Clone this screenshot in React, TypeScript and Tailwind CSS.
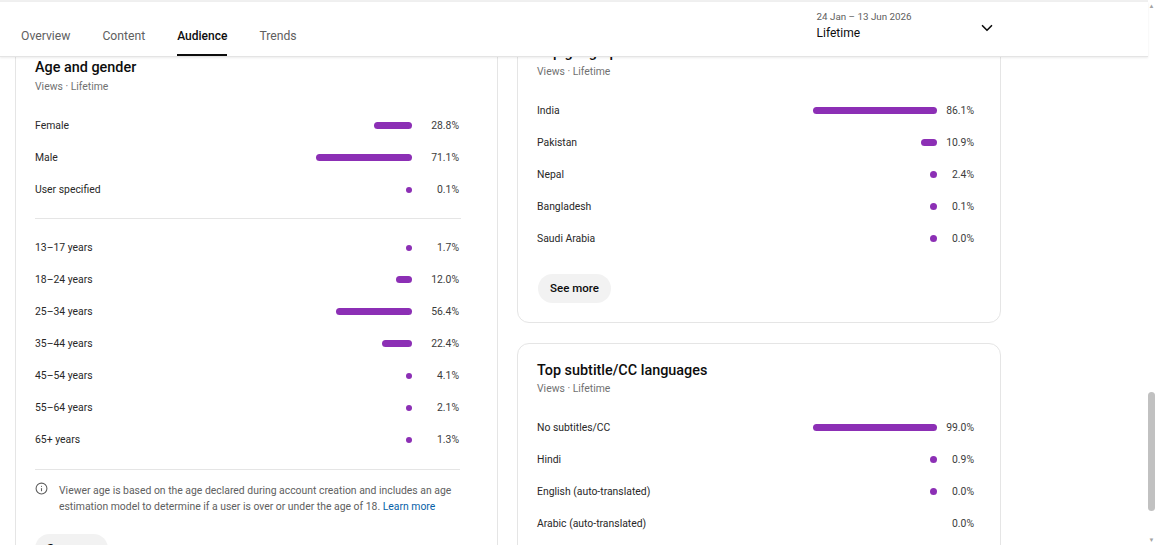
import { ChevronDown, Info } from "lucide-react";

type Row = { label: string; value: string; bar: number };

const gender: Row[] = [
  { label: "Female", value: "28.8%", bar: 38 },
  { label: "Male", value: "71.1%", bar: 96 },
  { label: "User specified", value: "0.1%", bar: 6 },
];

const ages: Row[] = [
  { label: "13–17 years", value: "1.7%", bar: 6 },
  { label: "18–24 years", value: "12.0%", bar: 16 },
  { label: "25–34 years", value: "56.4%", bar: 76 },
  { label: "35–44 years", value: "22.4%", bar: 30 },
  { label: "45–54 years", value: "4.1%", bar: 6 },
  { label: "55–64 years", value: "2.1%", bar: 6 },
  { label: "65+ years", value: "1.3%", bar: 6 },
];

const geographies: Row[] = [
  { label: "India", value: "86.1%", bar: 124 },
  { label: "Pakistan", value: "10.9%", bar: 16 },
  { label: "Nepal", value: "2.4%", bar: 7 },
  { label: "Bangladesh", value: "0.1%", bar: 7 },
  { label: "Saudi Arabia", value: "0.0%", bar: 7 },
];

const subtitles: Row[] = [
  { label: "No subtitles/CC", value: "99.0%", bar: 124 },
  { label: "Hindi", value: "0.9%", bar: 7 },
  { label: "English (auto-translated)", value: "0.0%", bar: 7 },
  { label: "Arabic (auto-translated)", value: "0.0%", bar: 0 },
];

const tabs = ["Overview", "Content", "Audience", "Trends"];

function BarRow({ row, wide }: { row: Row; wide?: boolean }) {
  return (
    <div className="flex h-8 items-center text-[10.4px] text-[#282828]">
      <span className="flex-1">{row.label}</span>
      {row.bar > 0 ? (
        <span
          className="-mt-px rounded-full bg-[#8c2fb5]"
          style={{ width: row.bar, height: Math.min(row.bar, 7) }}
        />
      ) : null}
      <span
        className={`text-right text-[#3c3c3c] ${wide ? "w-[44px] pr-[7px]" : "w-[49px] pr-0.5"}`}
      >
        {row.value}
      </span>
    </div>
  );
}

function CardTitle({ title }: { title: string }) {
  return <h2 className="text-[14.4px] leading-[22px] font-medium text-[#0d0d0d]">{title}</h2>;
}

function CardSub() {
  return <p className="text-[10.4px] leading-[14px] text-[#717171]">Views · Lifetime</p>;
}

export default function App() {
  return (
    <div className="relative h-[545px] w-[1155px] overflow-hidden bg-white font-['Roboto',sans-serif]">
      <div className="h-[2px] bg-[#f0f0f0]" />

      <header className="relative z-10 flex h-[55px] w-[1148px] items-end border-b border-[#e4e4e4] bg-white pl-[21px] shadow-[0_1px_2px_rgba(0,0,0,0.08)]">
        <nav className="flex gap-8">
          {tabs.map((tab) => (
            <span
              key={tab}
              className={`h-[40px] pt-[5px] leading-[31px] ${
                tab === "Audience"
                  ? "border-b-2 border-[#0d0d0d] text-[12px] font-medium text-[#0d0d0d]"
                  : "text-[12.2px] font-normal text-[#606060]"
              }`}
            >
              {tab}
            </span>
          ))}
        </nav>
        <div className="mb-[14px] ml-[520px] flex w-[179px] items-center justify-between">
          <div>
            <p className="text-[9.8px] leading-[12px] text-[#606060]">24 Jan – 13 Jun 2026</p>
            <p className="mt-px text-[12px] leading-[18px] text-[#0d0d0d]">Lifetime</p>
          </div>
          <ChevronDown size={18} strokeWidth={2.2} className="mt-[3px] text-[#0d0d0d]" />
        </div>
      </header>

      <main className="-mt-[17px] flex gap-[19px] pl-[15px]">
        <section className="w-[483px] shrink-0 rounded-xl border border-[#e5e5e5] pt-[16px] pr-[36px] pb-8 pl-[19px]">
          <CardTitle title="Age and gender" />
          <div className="mt-px">
            <CardSub />
          </div>
          <div className="mt-4">
            {gender.map((row) => (
              <BarRow key={row.label} row={row} />
            ))}
          </div>
          <div className="mt-[12px] mb-[13px] border-t border-[#e5e5e5]" />
          <div>
            {ages.map((row) => (
              <BarRow key={row.label} row={row} />
            ))}
          </div>
          <div className="mt-[13px] mr-px border-t border-[#e5e5e5] pt-[13px]">
            <div className="flex gap-[11px] text-[10.4px] leading-4 text-[#606060]">
              <Info size={13} strokeWidth={2} className="mt-[-1px] shrink-0 text-[#606060]" />
              <p>
                Viewer age is based on the age declared during account creation and includes an age
                estimation model to determine if a user is over or under the age of 18.{" "}
                <span className="text-[#065fa8]">Learn more</span>
              </p>
            </div>
          </div>
          <button className="mt-[19px] h-[29px] w-[73px] rounded-full bg-[#f2f2f2] text-[11.5px] font-medium text-[#0d0d0d]">
            See more
          </button>
        </section>

        <div className="-mt-[14px] flex w-[484px] shrink-0 flex-col gap-5">
          <section className="rounded-xl border border-[#e5e5e5] pt-[15px] pr-[19px] pb-[19px] pl-[19px]">
            <CardTitle title="Top geographies" />
            <div className="mt-px">
              <CardSub />
            </div>
            <div className="mt-4">
              {geographies.map((row) => (
                <BarRow key={row.label} row={row} wide />
              ))}
            </div>
            <button className="mt-[19px] ml-px h-[29px] w-[73px] rounded-full bg-[#f2f2f2] text-[11.5px] font-medium text-[#0d0d0d]">
              See more
            </button>
          </section>

          <section className="rounded-xl border border-[#e5e5e5] pt-[16px] pr-[19px] pb-[19px] pl-[19px]">
            <CardTitle title="Top subtitle/CC languages" />
            <CardSub />
            <div className="mt-4">
              {subtitles.map((row) => (
                <BarRow key={row.label} row={row} wide />
              ))}
            </div>
          </section>
        </div>
      </main>

      <div className="absolute top-0 right-0 bottom-0 flex w-[7px] flex-col items-center bg-white">
        <span className="mt-[2px] text-[6px] leading-[8px] text-[#a3a3a3]">▲</span>
        <div className="mt-[382px] h-[119px] w-[7px] rounded-sm bg-[#c1c1c1]" />
        <span className="mt-auto mb-[1px] text-[6px] leading-[8px] text-[#a3a3a3]">▼</span>
      </div>
    </div>
  );
}
